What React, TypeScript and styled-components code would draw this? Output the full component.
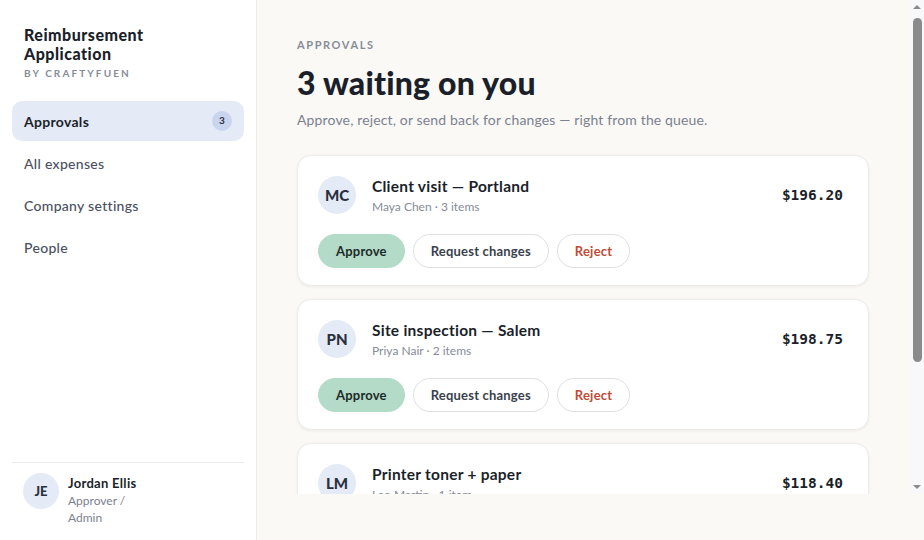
import React from 'react';
import styled, { createGlobalStyle } from 'styled-components';

const GlobalStyle = createGlobalStyle`
  html, body {
    margin: 0;
    padding: 0;
    background: #faf9f6;
    font-family: Lato, "Noto Sans", sans-serif;
    color: #1b1f2a;
  }
  * { box-sizing: border-box; }
`;

// data
interface Request {
  initials: string;
  title: string;
  who: string;
  items: number;
  amount: string;
}

const requests: Request[] = [
  { initials: 'MC', title: 'Client visit — Portland', who: 'Maya Chen', items: 3, amount: '$196.20' },
  { initials: 'PN', title: 'Site inspection — Salem', who: 'Priya Nair', items: 2, amount: '$198.75' },
  { initials: 'LM', title: 'Printer toner + paper', who: 'Leo Martin', items: 1, amount: '$118.40' },
];

const navItems = ['Approvals', 'All expenses', 'Company settings', 'People'];

// layout
const Shell = styled.div`
  display: flex;
  height: 100vh;
`;

const Sidebar = styled.aside`
  width: 257px;
  flex-shrink: 0;
  background: #fff;
  border-right: 1px solid #ececec;
  display: flex;
  flex-direction: column;
  padding: 0 12px;
`;

const Brand = styled.div`
  padding: 25px 12px 22px;
  h1 {
    margin: 0;
    font-size: 16px;
    line-height: 19px;
    font-weight: 900;
    letter-spacing: 0.5px;
  }
  p {
    margin: 4px 0 0;
    font-size: 10px;
    font-weight: 700;
    letter-spacing: 2.1px;
    color: #878c98;
  }
`;

const Nav = styled.nav`
  display: flex;
  flex-direction: column;
  gap: 2px;
`;

const NavItem = styled.div<{ $active?: boolean }>`
  height: 40px;
  display: flex;
  align-items: center;
  justify-content: space-between;
  padding: 0 12px;
  border-radius: 10px;
  font-size: 14px;
  letter-spacing: 0.3px;
  font-weight: ${p => (p.$active ? 700 : 500)};
  color: ${p => (p.$active ? '#1b1f2a' : '#4a5060')};
  background: ${p => (p.$active ? '#e4ebf6' : 'transparent')};
`;

const Badge = styled.span`
  width: 20px;
  height: 20px;
  border-radius: 50%;
  background: #c9d5ee;
  font-size: 10px;
  font-weight: 700;
  letter-spacing: 0;
  display: flex;
  align-items: center;
  justify-content: center;
  padding-bottom: 2px;
  color: #2a3040;
`;

const Footer = styled.div`
  margin-top: auto;
  border-top: 1px solid #ececec;
  padding: 10px 11px 14px;
  display: flex;
  gap: 9px;
  align-items: flex-start;
`;

const Avatar = styled.div<{ $size: number }>`
  width: ${p => p.$size}px;
  height: ${p => p.$size}px;
  border-radius: 50%;
  background: #e4ebf6;
  flex-shrink: 0;
  display: flex;
  align-items: center;
  justify-content: center;
  font-size: ${p => (p.$size > 37 ? 15 : 13)}px;
  font-weight: 900;
  color: #2a3040;
`;

const UserText = styled.div`
  width: 76px;
  padding-top: 1px;
  strong {
    display: block;
    font-size: 13px;
    line-height: 18px;
    font-weight: 700;
    letter-spacing: 0.3px;
  }
  span {
    display: block;
    font-size: 12px;
    line-height: 17px;
    color: #7c8190;
  }
`;

const Main = styled.main`
  flex: 1;
  min-width: 0;
  display: flex;
  align-items: flex-start;
`;

const Scroller = styled.div`
  flex: 1;
  height: 494px;
  overflow-y: auto;
  scrollbar-width: none;
  padding: 38px 41px 96px 40px;
`;

// scroll rail drawn to match the classic scrollbar
const Rail = styled.div`
  width: 14px;
  height: 494px;
  background: #f8f8fa;
  display: flex;
  flex-direction: column;
  align-items: center;
`;

const Arrow = styled.div<{ $down?: boolean }>`
  height: 14px;
  display: flex;
  align-items: center;
  justify-content: center;
  &::before {
    content: '';
    border-left: 4px solid transparent;
    border-right: 4px solid transparent;
    ${p => (p.$down ? 'border-top: 4px solid #8a8a8a;' : 'border-bottom: 4px solid #8a8a8a;')}
  }
`;

const Track = styled.div`
  flex: 1;
  width: 100%;
  padding: 4px 2px 0 3px;
`;

const Thumb = styled.div`
  height: 344px;
  border-radius: 5px;
  background: #8a8a8a;
`;

const Eyebrow = styled.div`
  font-size: 11px;
  font-weight: 700;
  letter-spacing: 1.6px;
  color: #878c98;
`;

const Heading = styled.h2`
  margin: 12px 0 0;
  font-size: 32px;
  line-height: 40px;
  font-weight: 900;
  letter-spacing: 0.2px;
`;

const Lede = styled.p`
  margin: 8px 0 0;
  font-size: 14px;
  letter-spacing: 0.15px;
  color: #7c8190;
`;

const List = styled.div`
  margin-top: 27px;
  display: flex;
  flex-direction: column;
  gap: 13px;
`;

const Card = styled.div`
  background: #fff;
  border: 1px solid #ececec;
  border-radius: 14px;
  box-shadow: 0 1px 3px rgba(20, 24, 40, 0.06);
  padding: 20px 25px 17px 20px;
`;

const CardTop = styled.div`
  display: flex;
  align-items: center;
  gap: 16px;
`;

const CardText = styled.div`
  flex: 1;
  h3 {
    margin: 0;
    font-size: 15.5px;
    line-height: 20px;
    font-weight: 700;
    letter-spacing: 0.25px;
  }
  p {
    margin: 3px 0 0;
    font-size: 12px;
    color: #868b97;
  }
`;

const Amount = styled.div`
  font-family: "DejaVu Sans Mono", "Liberation Mono", monospace;
  font-size: 14.5px;
  font-weight: 700;
`;

const Actions = styled.div`
  display: flex;
  gap: 8px;
  margin-top: 20px;
`;

const Button = styled.button<{ $kind: 'approve' | 'plain' | 'danger' }>`
  height: 34px;
  padding: 0 17px;
  border-radius: 999px;
  font-family: inherit;
  font-size: 13px;
  font-weight: 700;
  letter-spacing: 0.2px;
  border: 1px solid ${p => (p.$kind === 'approve' ? '#b4dbc8' : '#dfe0e4')};
  background: ${p => (p.$kind === 'approve' ? '#b4dbc8' : '#fff')};
  color: ${p => (p.$kind === 'danger' ? '#bf4d37' : p.$kind === 'approve' ? '#1c2a28' : '#3a3f4c')};
`;

export default function App() {
  return (
    <>
      <GlobalStyle />
      <Shell>
        <Sidebar>
          <Brand>
            <h1>Reimbursement<br />Application</h1>
            <p>BY CRAFTYFUEN</p>
          </Brand>
          <Nav>
            {navItems.map((item, i) => (
              <NavItem key={item} $active={i === 0}>
                {item}
                {i === 0 && <Badge>3</Badge>}
              </NavItem>
            ))}
          </Nav>
          <Footer>
            <Avatar $size={36}>JE</Avatar>
            <UserText>
              <strong>Jordan Ellis</strong>
              <span>Approver / Admin</span>
            </UserText>
          </Footer>
        </Sidebar>
        <Main>
          <Scroller>
            <Eyebrow>APPROVALS</Eyebrow>
            <Heading>3 waiting on you</Heading>
            <Lede>Approve, reject, or send back for changes — right from the queue.</Lede>
            <List>
              {requests.map(r => (
                <Card key={r.initials}>
                  <CardTop>
                    <Avatar $size={38}>{r.initials}</Avatar>
                    <CardText>
                      <h3>{r.title}</h3>
                      <p>{r.who} · {r.items} {r.items === 1 ? 'item' : 'items'}</p>
                    </CardText>
                    <Amount>{r.amount}</Amount>
                  </CardTop>
                  <Actions>
                    <Button $kind="approve">Approve</Button>
                    <Button $kind="plain">Request changes</Button>
                    <Button $kind="danger">Reject</Button>
                  </Actions>
                </Card>
              ))}
            </List>
          </Scroller>
          <Rail>
            <Arrow />
            <Track><Thumb /></Track>
            <Arrow $down />
          </Rail>
        </Main>
      </Shell>
    </>
  );
}
